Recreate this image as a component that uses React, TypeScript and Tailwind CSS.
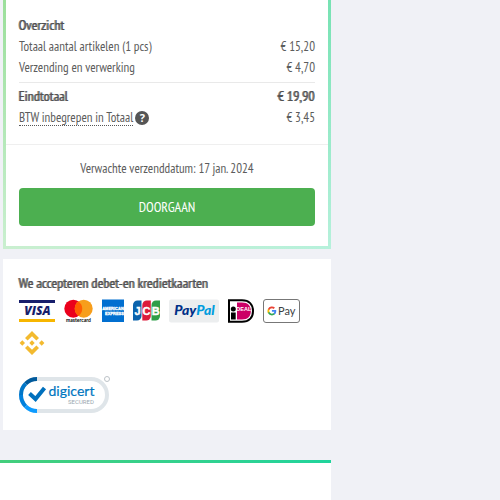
import React from "react";

const narrow = "font-['PT_Sans_Narrow','Liberation_Sans_Narrow','Roboto_Condensed','Open_Sans',sans-serif]";
const strong = "text-[14px] font-normal text-[#505050] [text-shadow:-1px_0_0_#777]";

function Row({ label, value }: { label: React.ReactNode; value: string }) {
  return (
    <div className="flex h-[21px] items-center justify-between">
      <dt className="flex items-center">{label}</dt>
      <dd>{value}</dd>
    </div>
  );
}

function Visa() {
  return (
    <svg width="36" height="24" viewBox="0 0 36 24" role="img" aria-label="Visa">
      <rect y="1" width="36" height="3" fill="#171e6c" />
      <rect y="20" width="36" height="3" fill="#f7b600" />
      <text x="18.500" y="16" textAnchor="middle" fontFamily="Open Sans, sans-serif" fontSize="12" fontWeight="800" fontStyle="italic" fill="#171e6c">VISA</text>
    </svg>
  );
}

function Mastercard() {
  return (
    <svg width="29" height="24" viewBox="0 0 29 24" role="img" aria-label="Mastercard">
      <circle cx="9.300" cy="9.700" r="9" fill="#eb001b" />
      <circle cx="19.700" cy="9.700" r="9" fill="#f79e1b" />
      <path d="M14.500 2.400a9 9 0 0 1 0 14.600a9 9 0 0 1 0-14.600Z" fill="#ff5f00" />
      <text x="14.500" y="23" textAnchor="middle" fontFamily="Lato, sans-serif" fontSize="5" fontWeight="700" fill="#000">mastercard</text>
    </svg>
  );
}

function Amex() {
  return (
    <svg width="22" height="24" viewBox="0 0 22 24" role="img" aria-label="American Express">
      <rect y=".5" width="22" height="22.500" fill="#016fd0" />
      <text x="11" y="11" textAnchor="middle" fontFamily="Liberation Sans, sans-serif" fontSize="4" fontWeight="700" fill="#fff" stroke="#fff" strokeWidth=".3">AMERICAN</text>
      <text x="12.500" y="16" textAnchor="middle" fontFamily="Liberation Sans, sans-serif" fontSize="4" fontWeight="700" fill="#fff" stroke="#fff" strokeWidth=".3">EXPRESS</text>
    </svg>
  );
}

function Jcb() {
  return (
    <svg width="27" height="24" viewBox="0 0 27 24" role="img" aria-label="JCB">
      <path d="M4.500 1.500h4V17a4.500 4.500 0 0 1-4.500 4.500H0V6a4.500 4.500 0 0 1 4.500-4.500Z" fill="#0b63ac" />
      <path d="M13.800 1.500h4V17a4.500 4.500 0 0 1-4.500 4.500h-4V6a4.500 4.500 0 0 1 4.500-4.500Z" fill="#dc1a3b" />
      <path d="M23 1.500h4V17a4.500 4.500 0 0 1-4.500 4.500h-4V6a4.500 4.500 0 0 1 4.500-4.500Z" fill="#2f9e48" />
      <text y="15.500" textAnchor="middle" fontFamily="Liberation Sans, sans-serif" fontSize="11" fontWeight="700" fill="#fff" stroke="#fff" strokeWidth=".4" x="4.500 13.500 22.800">JCB</text>
    </svg>
  );
}

function PayPal() {
  return (
    <svg width="50" height="24" viewBox="0 0 50 24" role="img" aria-label="PayPal">
      <rect y=".5" width="50" height="23" rx="2" fill="#eceeef" />
      <text x="25.500" y="16" textAnchor="middle" fontFamily="Lato, sans-serif" fontSize="14" fontWeight="900" fontStyle="italic" fill="#003087">
        Pay<tspan fill="#009cde">Pal</tspan>
      </text>
    </svg>
  );
}

function Ideal() {
  return (
    <svg width="26" height="24" viewBox="0 0 26 24" role="img" aria-label="iDEAL">
      <path d="M1 1.200h13C21 1.200 25 5.300 25 12s-4 10.800-11 10.800H1Z" fill="#fff" stroke="#000" strokeWidth="2" />
      <path d="M9 3.500h5c6 0 8.800 3.200 8.800 8.500s-2.800 8.500-8.800 8.500H9Z" fill="#cc0066" />
      <circle cx="5.300" cy="10" r="2.500" fill="#000" />
      <rect x="3" y="13.500" width="4.700" height="7" fill="#000" />
      <text x="15.800" y="12" textAnchor="middle" fontFamily="Liberation Sans, sans-serif" fontSize="5.500" fontWeight="700" fill="#fff">DEAL</text>
    </svg>
  );
}

function GooglePay() {
  return (
    <svg width="37" height="24" viewBox="0 0 37 24" role="img" aria-label="Google Pay">
      <rect x=".5" y=".5" width="36" height="23" rx="2.500" fill="#fff" stroke="#777" />
      <g transform="translate(4 7) scale(.41)">
        <path d="M22.560 12.250c0-.78-.07-1.530-.2-2.250H12v4.260h5.920a5.060 5.060 0 0 1-2.200 3.320v2.770h3.570c2.080-1.920 3.270-4.740 3.270-8.100Z" fill="#4285f4" />
        <path d="M12 23c2.970 0 5.460-.98 7.280-2.660l-3.570-2.770c-.98.660-2.230 1.060-3.710 1.060-2.860 0-5.290-1.930-6.160-4.530H2.180v2.840A11 11 0 0 0 12 23Z" fill="#34a853" />
        <path d="M5.840 14.090a6.600 6.600 0 0 1 0-4.180V7.070H2.180a11 11 0 0 0 0 9.860Z" fill="#fbbc05" />
        <path d="M12 5.380c1.620 0 3.060.56 4.210 1.640l3.150-3.150A11 11 0 0 0 2.180 7.070l3.660 2.840C6.710 7.310 9.140 5.380 12 5.380Z" fill="#ea4335" />
      </g>
      <text x="15" y="16" fontFamily="Lato, sans-serif" fontSize="11" fill="#3c4043">Pay</text>
    </svg>
  );
}

function Binance() {
  return (
    <svg width="26" height="24" viewBox="-13 -12 26 24" role="img" aria-label="Binance" fill="#f3ba2f">
      <path d="M0-12 7-5 4.400-2.400 0-6.800-4.400-2.400-7-5Z" />
      <path d="M0 12 7 5 4.400 2.400 0 6.800-4.400 2.400-7 5Z" />
      <path d="M0-2.700 2.700 0 0 2.700-2.700 0Z" />
      <path d="M-9.700-2.700-7 0-9.700 2.700-12.400 0Z" />
      <path d="M9.700-2.700 12.400 0 9.700 2.700 7 0Z" />
    </svg>
  );
}

function Digicert() {
  return (
    <svg width="92" height="38" viewBox="0 0 92 38" role="img" aria-label="DigiCert Secured">
      <rect x="2" y="3" width="86" height="32" rx="16" fill="#fff" stroke="#dfe5e9" strokeWidth="4" />
      <path d="M18 3A16 16 0 0 0 6.700 7.700" fill="none" stroke="#005a9c" strokeWidth="4" />
      <path d="M6.700 7.700A16 16 0 0 0 2 19" fill="none" stroke="#0076c8" strokeWidth="4" />
      <path d="M2 19A16 16 0 0 0 6.700 30.300" fill="none" stroke="#0080dc" strokeWidth="4" />
      <path d="M6.700 30.300A16 16 0 0 0 18 35" fill="none" stroke="#0c9bff" strokeWidth="4" />
      <path d="M10.500 17.500 16.500 23 25.500 12" fill="none" stroke="#0070bd" strokeWidth="4" />
      <text x="29.500" y="20" fontFamily="Lato, sans-serif" fontSize="14" fontWeight="400" fill="#0076c0" stroke="#0076c0" strokeWidth=".2">digicert</text>
      <text x="49" y="28" fontFamily="Roboto, sans-serif" fontSize="6" fill="#9aa7af">SECURED</text>
      <circle cx="88" cy="3" r="2.500" fill="#fff" stroke="#bcc2c7" />
    </svg>
  );
}

export default function App() {
  return (
    <div className={`flex min-h-screen bg-[#f0f1f6] text-[13px] leading-[21px] text-[#5c5c5c] ${narrow}`}>
      <main className="flex w-full max-w-[331px] flex-col">
        <section className="ml-[3px] bg-[linear-gradient(105deg,#9cdf9b,#6fe3b8)]">
          <div className="bg-linear-to-b from-white/0 to-white/50 px-[3px] pb-[3px]">
            <div className="bg-white pb-5">
              <div className="px-[13px] pt-[15px]">
                <h2 className={strong}>Overzicht</h2>
                <dl>
                  <Row label="Totaal aantal artikelen (1 pcs)" value="€ 15,20" />
                  <Row label="Verzending en verwerking" value="€ 4,70" />
                  <div className={`mt-1 border-t border-[#e9e9e9] pt-[3px] ${strong}`}>
                    <Row label="Eindtotaal" value="€ 19,90" />
                  </div>
                  <Row
                    label={
                      <>
                        <span className="border-b border-dotted border-[#555] leading-[15px]">BTW inbegrepen in Totaal</span>
                        <button type="button" aria-label="Uitleg" className="ml-[2px] flex size-[14px] items-center justify-center rounded-full bg-[#555] font-['Open_Sans',sans-serif] text-[11px] font-bold leading-[14px] text-white">?</button>
                      </>
                    }
                    value="€ 3,45"
                  />
                </dl>
              </div>
              <div className="mt-4 border-t border-[#efefef] px-[13px] pt-[13px] text-center">
                <p>Verwachte verzenddatum: 17 jan. 2024</p>
                <button type="button" className="mt-[9px] h-[38px] w-full rounded bg-[#4caf50] text-[14px] text-white">DOORGAAN</button>
              </div>
            </div>
          </div>
        </section>

        <section className="mt-[10px] ml-[3px] bg-white px-4 pt-[14px] pb-4">
          <h2 className={strong}>We accepteren debet-en kredietkaarten</h2>
          <div className="mt-[5px] flex flex-wrap gap-x-[9px] gap-y-2">
            <Visa />
            <Mastercard />
            <Amex />
            <Jcb />
            <PayPal />
            <Ideal />
            <GooglePay />
            <Binance />
          </div>
          <div className="mt-[21px]">
            <Digicert />
          </div>
        </section>

        <footer className="mt-[30px] flex grow bg-linear-to-r from-[#43ce7c] to-[#20d49c] pt-[3px]">
          <div className="grow bg-white" />
        </footer>
      </main>
    </div>
  );
}
